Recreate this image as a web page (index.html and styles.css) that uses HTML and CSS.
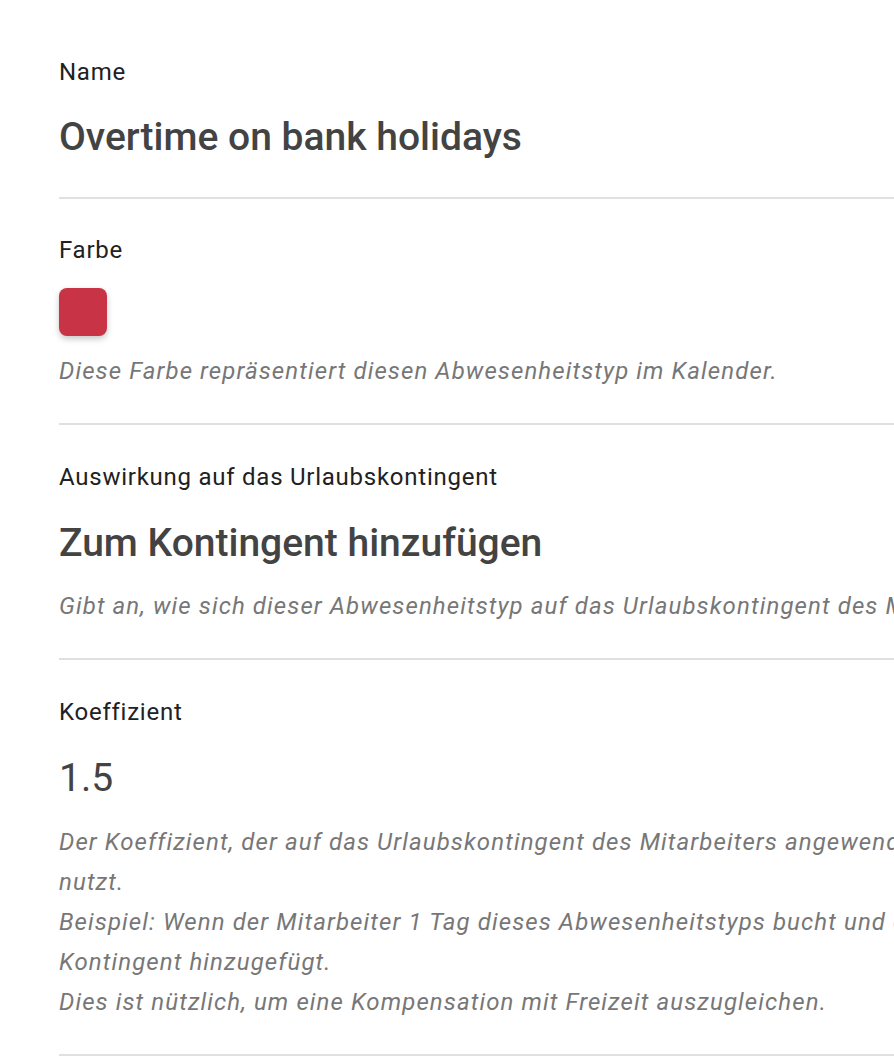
FILE: index.html
```html
<!DOCTYPE html>
<html lang="de">
<head>
<meta charset="utf-8">
<title>Abwesenheitstyp</title>
<link rel="stylesheet" href="styles.css">
</head>
<body>
<main class="page">
  <section class="field field-first">
    <div class="label">Name</div>
    <div class="value">Overtime on bank holidays</div>
  </section>
  <section class="field">
    <div class="label">Farbe</div>
    <div class="swatch"></div>
    <p class="hint">Diese Farbe repräsentiert diesen Abwesenheitstyp im Kalender.</p>
  </section>
  <section class="field field-roomy">
    <div class="label">Auswirkung auf das Urlaubskontingent</div>
    <div class="value value-tall">Zum Kontingent hinzufügen</div>
    <p class="hint">Gibt an, wie sich dieser Abwesenheitstyp auf das Urlaubskontingent des Mitarbeiters auswirkt.</p>
  </section>
  <section class="field field-roomy">
    <div class="label">Koeffizient</div>
    <div class="value value-number">1.5</div>
    <p class="hint hint-multi">Der Koeffizient, der auf das Urlaubskontingent des Mitarbeiters angewendet wird, wenn der Mitarbeiter diesen Abwesenheitstyp nutzt.<br>Beispiel: Wenn der Mitarbeiter 1 Tag dieses Abwesenheitstyps bucht und   einen Koeffizienten von 1.5 hat, werden 1.5 Tage zum Kontingent hinzugefügt.<br>Dies ist nützlich, um eine Kompensation mit Freizeit auszugleichen.</p>
  </section>
</main>
</body>
</html>
```
FILE: styles.css
```css
html, body {
  margin: 0;
  padding: 0;
  overflow: hidden;
  background: #ffffff;
}
body {
  font-family: Roboto, "Liberation Sans", sans-serif;
  color: #212121;
}
.page {
  width: 1471px;
  padding: 0 0 0 59px;
}
.field {
  padding: 39px 0 32px;
  border-bottom: 2px solid #e0e0e0;
}
.field-first {
  padding-top: 60px;
  padding-bottom: 36px;
}
.field-roomy {
  padding-top: 40px;
}
.label {
  font-size: 24px;
  line-height: 24px;
  letter-spacing: 0.75px;
  color: #212121;
}
.value {
  margin-top: 29px;
  font-size: 39px;
  line-height: 48px;
  font-weight: 500;
  color: #434343;
}
.value-tall {
  margin-top: 26px;
  line-height: 56px;
}
.value-number {
  margin-top: 30px;
  font-weight: 400;
}
.swatch {
  margin-top: 26px;
  width: 48px;
  height: 48px;
  border-radius: 8px;
  background: #c83445;
  box-shadow: 0 3px 6px rgba(0, 0, 0, 0.22);
}
.hint {
  margin: 15px 0 0;
  font-size: 24px;
  line-height: 40px;
  font-style: italic;
  letter-spacing: 1.1px;
  color: #777777;
}
.hint-multi {
  margin-top: 20px;
}
```
